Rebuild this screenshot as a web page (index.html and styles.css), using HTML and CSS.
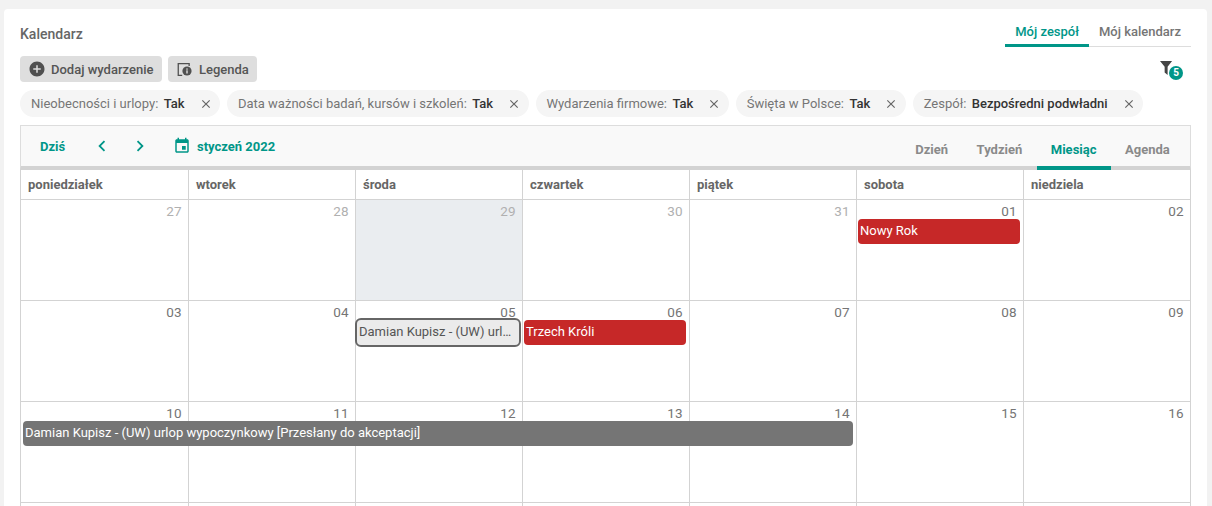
FILE: index.html
```html
<!DOCTYPE html>
<html lang="pl">
<head>
<meta charset="utf-8">
<title>Kalendarz</title>
<link rel="stylesheet" href="styles.css">
</head>
<body>
<main class="card">
  <header class="top">
    <h1 class="title">Kalendarz</h1>
    <nav class="tabs">
      <a class="tab tab-active">Mój zespół</a>
      <a class="tab">Mój kalendarz</a>
    </nav>
  </header>
  <div class="actions">
    <button class="btn">
      <svg class="btn-icon" viewBox="0 0 24 24"><path d="M12 2C6.48 2 2 6.48 2 12s4.48 10 10 10 10-4.48 10-10S17.52 2 12 2zm5 11h-4v4h-2v-4H7v-2h4V7h2v4h4v2z"/></svg>
      <span>Dodaj wydarzenie</span>
    </button>
    <button class="btn">
      <svg class="btn-icon" viewBox="0 0 18 18"><path d="M1.6 3h12.2v3h-1.3V4.3H2.9v10.4h3.3V16H1.6z"/><circle cx="11" cy="11" r="4.6"/><rect x="10.3" y="10.3" width="1.4" height="3.2" fill="#dedede"/><rect x="10.3" y="8.4" width="1.4" height="1.3" fill="#dedede"/></svg>
      <span>Legenda</span>
    </button>
    <div class="filter">
      <svg class="filter-icon" viewBox="0 0 14 15"><path d="M0 0h13L8.2 6.2V15L5 12.4V6.2z"/></svg>
      <span class="badge">5</span>
    </div>
  </div>
  <div class="chips">
    <div class="chip"><span class="chip-label">Nieobecności i urlopy:</span><b>Tak</b><svg class="chip-x" viewBox="0 0 24 24"><path d="M19 6.41L17.59 5 12 10.59 6.41 5 5 6.41 10.59 12 5 17.59 6.41 19 12 13.41 17.59 19 19 17.59 13.41 12z"/></svg></div>
    <div class="chip"><span class="chip-label">Data ważności badań, kursów i szkoleń:</span><b>Tak</b><svg class="chip-x" viewBox="0 0 24 24"><path d="M19 6.41L17.59 5 12 10.59 6.41 5 5 6.41 10.59 12 5 17.59 6.41 19 12 13.41 17.59 19 19 17.59 13.41 12z"/></svg></div>
    <div class="chip"><span class="chip-label">Wydarzenia firmowe:</span><b>Tak</b><svg class="chip-x" viewBox="0 0 24 24"><path d="M19 6.41L17.59 5 12 10.59 6.41 5 5 6.41 10.59 12 5 17.59 6.41 19 12 13.41 17.59 19 19 17.59 13.41 12z"/></svg></div>
    <div class="chip"><span class="chip-label">Święta w Polsce:</span><b>Tak</b><svg class="chip-x" viewBox="0 0 24 24"><path d="M19 6.41L17.59 5 12 10.59 6.41 5 5 6.41 10.59 12 5 17.59 6.41 19 12 13.41 17.59 19 19 17.59 13.41 12z"/></svg></div>
    <div class="chip"><span class="chip-label">Zespół:</span><b>Bezpośredni podwładni</b><svg class="chip-x" viewBox="0 0 24 24"><path d="M19 6.41L17.59 5 12 10.59 6.41 5 5 6.41 10.59 12 5 17.59 6.41 19 12 13.41 17.59 19 19 17.59 13.41 12z"/></svg></div>
  </div>
  <section class="calendar">
    <div class="toolbar">
      <div class="nav">
        <span class="today">Dziś</span>
        <svg class="chev chev-prev" viewBox="0 0 24 24"><path d="M15.41 7.41L14 6l-6 6 6 6 1.41-1.41L10.83 12z"/></svg>
        <svg class="chev chev-next" viewBox="0 0 24 24"><path d="M8.59 16.59L10 18l6-6-6-6-1.41 1.41L13.17 12z"/></svg>
        <svg class="cal-icon" viewBox="0 0 24 24"><path d="M17 12h-5v5h5v-5zM16 1v2H8V1H6v2H5c-1.11 0-1.99.9-1.99 2L3 19c0 1.1.89 2 2 2h14c1.1 0 2-.9 2-2V5c0-1.1-.9-2-2-2h-1V1h-2zm3 18H5V8h14v11z"/></svg>
        <span class="month">styczeń 2022</span>
      </div>
      <div class="views">
        <span class="view">Dzień</span>
        <span class="view">Tydzień</span>
        <span class="view view-active">Miesiąc</span>
        <span class="view">Agenda</span>
      </div>
    </div>
    <div class="head">
      <div class="head-cell">poniedziałek</div>
      <div class="head-cell">wtorek</div>
      <div class="head-cell">środa</div>
      <div class="head-cell">czwartek</div>
      <div class="head-cell">piątek</div>
      <div class="head-cell">sobota</div>
      <div class="head-cell">niedziela</div>
    </div>
    <div class="week">
      <div class="bg c1"></div><div class="bg c2"></div><div class="bg c3 bg-today"></div><div class="bg c4"></div><div class="bg c5"></div><div class="bg c6"></div><div class="bg c7"></div>
      <div class="date c1 off">27</div><div class="date c2 off">28</div><div class="date c3 off">29</div><div class="date c4 off">30</div><div class="date c5 off">31</div><div class="date c6">01</div><div class="date c7">02</div>
      <div class="event red c6">Nowy Rok</div>
    </div>
    <div class="week">
      <div class="bg c1"></div><div class="bg c2"></div><div class="bg c3"></div><div class="bg c4"></div><div class="bg c5"></div><div class="bg c6"></div><div class="bg c7"></div>
      <div class="date c1">03</div><div class="date c2">04</div><div class="date c3">05</div><div class="date c4">06</div><div class="date c5">07</div><div class="date c6">08</div><div class="date c7">09</div>
      <div class="event pending c3">Damian Kupisz - (UW) urlop wypoczynkowy [Przesłany do akceptacji]</div>
      <div class="event red c4">Trzech Króli</div>
    </div>
    <div class="week">
      <div class="bg c1"></div><div class="bg c2"></div><div class="bg c3"></div><div class="bg c4"></div><div class="bg c5"></div><div class="bg c6"></div><div class="bg c7"></div>
      <div class="date c1">10</div><div class="date c2">11</div><div class="date c3">12</div><div class="date c4">13</div><div class="date c5">14</div><div class="date c6">15</div><div class="date c7">16</div>
      <div class="event gray span-1-5">Damian Kupisz - (UW) urlop wypoczynkowy [Przesłany do akceptacji]</div>
    </div>
    <div class="week">
      <div class="bg c1"></div><div class="bg c2"></div><div class="bg c3"></div><div class="bg c4"></div><div class="bg c5"></div><div class="bg c6"></div><div class="bg c7"></div>
    </div>
  </section>
</main>
</body>
</html>
```
FILE: styles.css
```css
* { box-sizing: border-box; }
html, body { height: 100%; overflow: hidden; }
body {
  margin: 0;
  padding: 9px 5px 0 4px;
  background: #f2f2f2;
  font-family: Roboto, "Liberation Sans", sans-serif;
  font-size: 13px;
  color: #666;
}
.card {
  background: #fff;
  border-radius: 4px 4px 0 0;
  padding: 0 16px;
  height: 497px;
  overflow: hidden;
}
.top {
  display: flex;
  justify-content: space-between;
  align-items: flex-start;
  height: 47px;
  padding-top: 15px;
}
.title {
  margin: 0;
  font-size: 14px;
  font-weight: 500;
  line-height: 20px;
  color: #666;
}
.tabs {
  display: flex;
  border-bottom: 1px solid #ddd;
  height: 23px;
}
.tab {
  padding: 0 10px;
  line-height: 16px;
  height: 23px;
  font-weight: 500;
  color: #757575;
}
.tab-active {
  color: #009688;
  border-bottom: 3px solid #009688;
}
.actions {
  display: flex;
  gap: 6px;
  align-items: flex-start;
  height: 34px;
}
.btn {
  display: flex;
  align-items: center;
  gap: 5px;
  height: 26px;
  margin: 0;
  padding: 0 8.5px 0 8px;
  border: 0;
  border-radius: 4px;
  background: #dedede;
  font: 500 13px Roboto, "Liberation Sans", sans-serif;
  color: #555;
}
.btn-icon { width: 18px; height: 18px; fill: #505050; flex: none; }
.filter {
  position: relative;
  margin-left: auto;
  margin-right: 19px;
  width: 12px;
  height: 14px;
  margin-top: 5px;
}
.filter-icon { display: block; width: 13px; height: 14px; fill: #444; }
.badge {
  position: absolute;
  left: 9px;
  top: 5px;
  width: 14px;
  height: 14px;
  border-radius: 50%;
  background: #009688;
  color: #fff;
  font-size: 10px;
  font-weight: 700;
  line-height: 14px;
  text-align: center;
}
.chips {
  display: flex;
  gap: 6.6px;
  height: 35px;
}
.chip {
  display: flex;
  align-items: center;
  height: 27px;
  padding: 0 7.8px 0 11px;
  border-radius: 14px;
  background: #f5f5f5;
  white-space: nowrap;
}
.chip-label { color: #757575; margin-right: 5.4px; }
.chip b { font-weight: 500; color: #333; }
.chip-x { width: 14px; height: 14px; margin-left: 14px; fill: #666; flex: none; }
.calendar { width: 1171px; border-top: 1px solid #ddd; }
.toolbar {
  display: flex;
  justify-content: space-between;
  height: 44px;
  background: #f9f9f9;
  border-left: 1px solid #ddd;
  border-right: 1px solid #ddd;
  border-bottom: 4px solid #d3d3d3;
  padding: 0 6px 0 19px;
  font-weight: 700;
}
.nav { display: flex; align-items: center; height: 40px; color: #009688; }
.today { width: 25px; }
.chev { width: 22px; height: 22px; fill: #009688; flex: none; }
.chev-prev { margin-left: 26px; }
.chev-next { margin-left: 16px; }
.cal-icon { width: 18px; height: 18px; fill: #009688; margin-left: 22px; margin-right: 6px; flex: none; }
.views { display: flex; height: 44px; }
.view {
  padding: 0 14.25px;
  line-height: 47px;
  height: 44px;
  color: #8a8a8a;
}
.view-active {
  color: #009688;
  border-bottom: 4px solid #009688;
}
.head, .week {
  display: grid;
  grid-template-columns: 168px repeat(6, 167px);
  border-left: 1px solid #d3d3d3;
}
.head-cell {
  height: 30px;
  padding: 0 7px;
  line-height: 29px;
  font-weight: 700;
  color: #666;
  border-right: 1px solid #d3d3d3;
  border-bottom: 1px solid #d3d3d3;
}
.week {
  grid-template-rows: 19px 25px 57px;
}
.bg {
  grid-row: 1 / 4;
  border-right: 1px solid #d3d3d3;
  border-bottom: 1px solid #d3d3d3;
}
.bg-today { background: #eaedf0; }
.c1 { grid-column: 1; }
.c2 { grid-column: 2; }
.c3 { grid-column: 3; }
.c4 { grid-column: 4; }
.c5 { grid-column: 5; }
.c6 { grid-column: 6; }
.c7 { grid-column: 7; }
.date {
  grid-row: 1;
  padding: 4px 7.5px 0 0;
  text-align: right;
  font-size: 13.5px;
  line-height: 15px;
  color: #757575;
  z-index: 1;
}
.off { color: #b0b0b0; }
.event {
  grid-row: 2;
  margin: 0 4px 0 1px;
  min-width: 0;
  padding: 0 5px 0 2px;
  border-radius: 4px;
  font-size: 13px;
  line-height: 24px;
  white-space: nowrap;
  overflow: hidden;
  text-overflow: ellipsis;
  z-index: 1;
}
.red { background: #c62828; color: #fff; }
.gray { background: #757575; color: #fff; }
.pending { background: #ebebeb; color: #555; outline: 2px solid #666; }
.span-1-5 { grid-column: 1 / 6; margin-left: 2px; }
```
